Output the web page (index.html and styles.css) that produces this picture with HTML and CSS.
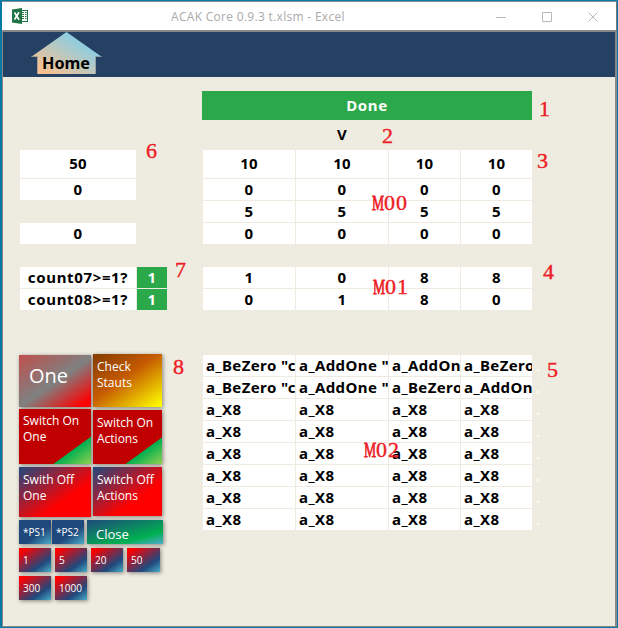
FILE: index.html
```html
<!DOCTYPE html>
<html lang="en">
<head>
<meta charset="utf-8">
<title>ACAK Core 0.9.3 t.xlsm - Excel</title>
<link rel="stylesheet" href="styles.css">
</head>
<body>
<div class="window">
  <header class="titlebar">
    <svg class="excel" width="16" height="16" viewBox="0 0 16 16">
      <rect x="8.5" y="2.5" width="7" height="11" fill="#fff" stroke="#217346"/>
      <path d="M10 4.5h2M13 4.5h1.500M10 6.500h2M13 6.500h1.500M10 8.500h2M13 8.500h1.500M10 10.500h2M13 10.500h1.500" stroke="#217346"/>
      <path d="M0 1.500 10 0v16L0 14.500z" fill="#217346"/>
      <path d="m2.500 4.500 4.500 7.200M7 4.300 2.500 11.500" stroke="#fff" stroke-width="1.700"/>
    </svg>
    <span class="title">ACAK Core 0.9.3 t.xlsm - Excel</span>
    <svg class="controls" width="102" height="10" viewBox="0 0 102 10" fill="none" stroke="#b9b9b9">
      <path d="M0 5.500h10M46.500.5h9v9h-9zM92.500.5l9 9M101.500.5l-9 9"/>
    </svg>
  </header>
  <nav class="ribbon">
    <svg class="house" width="71" height="42" viewBox="0 0 71 42">
      <defs><linearGradient id="roof" x1="0" y1="1" x2="1" y2="0"><stop offset=".1" stop-color="#fac090"/><stop offset=".7" stop-color="#93cddd"/></linearGradient></defs>
      <path d="M35.500 0 71 25h-6v17H6V25H0z" fill="url(#roof)"/>
      <path d="M.5 24.500H6.500V42M70.500 24.500H64.500V42" fill="none" stroke="#8b8b8b" stroke-opacity=".65"/>
      <text class="home" x="11" y="37" textLength="48" lengthAdjust="spacingAndGlyphs">Home</text>
    </svg>
  </nav>
  <main class="sheet">
    <section class="left">
      <div class="grid single">
        <span class="tall">50</span><span>0</span>
      </div>
      <div class="grid single"><span>0</span></div>
      <div class="grid counts">
        <span class="label">count07&gt;=1?</span><span class="on">1</span>
        <span class="label">count08&gt;=1?</span><span class="on">1</span>
      </div>
      <div class="buttons">
        <div class="pair">
          <div class="stack">
            <div role="button" class="btn one">One</div>
            <div role="button" class="btn on-one">Switch On<br>One</div>
            <div role="button" class="btn off-one">Swith Off<br>One</div>
          </div>
          <div class="stack second">
            <div role="button" class="btn check">Check<br>Stauts</div>
            <div role="button" class="btn on-actions">Switch On<br>Actions</div>
            <div role="button" class="btn off-actions">Switch Off<br>Actions</div>
          </div>
        </div>
        <div class="line tools">
          <div role="button" class="btn ps">*PS1</div><div role="button" class="btn ps">*PS2</div><div role="button" class="btn close">Close</div>
        </div>
        <div class="line">
          <div role="button" class="btn num">1</div><div role="button" class="btn num">5</div><div role="button" class="btn num">20</div><div role="button" class="btn num wide">50</div>
        </div>
        <div class="line">
          <div role="button" class="btn num">300</div><div role="button" class="btn num">1000</div>
        </div>
      </div>
    </section>
    <section class="right">
      <div class="done">Done</div>
      <div class="marker">V</div>
      <div class="grid quad">
        <span class="tall">10</span><span class="tall">10</span><span class="tall">10</span><span class="tall">10</span>
        <span>0</span><span>0</span><span>0</span><span>0</span>
        <span>5</span><span>5</span><span>5</span><span>5</span>
        <span>0</span><span>0</span><span>0</span><span>0</span>
      </div>
      <div class="grid quad">
        <span>1</span><span>0</span><span>8</span><span>8</span>
        <span>0</span><span>1</span><span>8</span><span>0</span>
      </div>
      <div class="grid quad actions">
        <span>a_BeZero "c</span><span>a_AddOne "</span><span>a_AddOn</span><span>a_BeZero</span><i>.</i>
        <span>a_BeZero "c</span><span>a_AddOne "</span><span>a_BeZero</span><span>a_AddOn</span><i>.</i>
        <span>a_X8</span><span>a_X8</span><span>a_X8</span><span>a_X8</span><i>.</i>
        <span>a_X8</span><span>a_X8</span><span>a_X8</span><span>a_X8</span><i>.</i>
        <span>a_X8</span><span>a_X8</span><span>a_X8</span><span>a_X8</span><i>.</i>
        <span>a_X8</span><span>a_X8</span><span>a_X8</span><span>a_X8</span><i>.</i>
        <span>a_X8</span><span>a_X8</span><span>a_X8</span><span>a_X8</span><i>.</i>
        <span>a_X8</span><span>a_X8</span><span>a_X8</span><span>a_X8</span><i>.</i>
      </div>
    </section>
  </main>
  <b class="note n1">1</b><b class="note n2">2</b><b class="note n3">3</b><b class="note n4">4</b>
  <b class="note n5">5</b><b class="note n6">6</b><b class="note n7">7</b><b class="note n8">8</b>
  <b class="note m0"><span>M</span>00</b><b class="note m1"><span>M</span>01</b><b class="note m2"><span>M</span>02</b>
</div>
</body>
</html>
```
FILE: styles.css
```css
* { box-sizing: border-box; }
body { margin: 0; font-family: "Noto Sans", "Open Sans", sans-serif; overflow: hidden; }
.window {
  position: relative; width: 618px; height: 628px; overflow: hidden;
  background: #eeebe0; border: 1px solid #0878a4; border-left-width: 2px;
  display: flex; flex-direction: column;
}
.titlebar {
  height: 31px; flex: none; background: #fff; border-top: 1px solid #8a9296;
  border-bottom: 2px solid #888; display: flex; align-items: center;
  border-right: 1px solid #777;
}
.excel { margin-left: 10px; }
.title { margin-left: 143px; width: 176px; font-family: "Open Sans", sans-serif; font-size: 12px; letter-spacing: .3px; color: #aaa; white-space: nowrap; }
.controls { margin-left: 149px; margin-top: 1px; }
.ribbon { height: 45px; flex: none; background: #244062; padding-left: 28px; border-left: 1px solid #888; border-right: 2px solid #888; }
.house { display: block; }
.home { font-weight: 700; font-size: 16.500px; }
.sheet { flex: 1; display: flex; border: solid #888; border-width: 0 2px 1px 1px; }
.left { width: 199px; padding: 73px 0 0 17px; }
.right { width: 380px; padding-top: 14px; }

.grid { display: grid; gap: 1px; grid-auto-rows: minmax(21px, auto); margin-bottom: 23px; font-size: 15px; letter-spacing: .25px; font-weight: 700; line-height: 21px; text-align: center; }
.grid span { background: #fff; height: 21px; overflow: hidden; white-space: nowrap; }
.grid .tall { height: 28px; line-height: 26px; }
.grid .label { letter-spacing: .65px; }
.single { grid-template-columns: 116px; }
.counts { grid-template-columns: 116px 30px; margin-bottom: 45px; }
.grid .on { background: #2ba84a; color: #fff; }
.quad { grid-template-columns: 92px 92px 71px 71px; margin-left: 1px; }
.actions { grid-template-columns: 92px 92px 71px 71px 12px; margin-top: 45px; text-align: left; letter-spacing: .4px; }
.actions span { padding-left: 3px; }
.actions i { padding-left: 3px; color: #fff; font-style: normal; font-weight: 400; height: 21px; }
.done { width: 330px; height: 29px; line-height: 29px; background: #2ba84a; color: #fff; font-weight: 700; font-size: 15px; letter-spacing: .6px; text-align: center; }
.marker { width: 92px; margin-left: 94px; height: 30px; line-height: 29px; font-weight: 700; font-size: 15px; text-align: center; }

.buttons { width: 146px; margin-left: -1px; }
.pair { display: flex; gap: 2px; height: 165px; }
.stack { width: 72px; display: flex; flex-direction: column; }
.second { width: 69px; margin-top: -1px; }
.btn {
  flex: none; padding: 4px 0 0 4px; color: #fff;
  font: 12px/16px "Open Sans", sans-serif; white-space: nowrap;
  box-shadow: 1px 1px 4px rgba(0, 0, 0, .45);
}
.one { height: 52px; padding: 9px 0 0 10px; font-size: 20px; line-height: 24px; background: linear-gradient(145deg, #c0504d, #808080 50%, #808080 52%, #f00 92%); }
.check { height: 53px; margin-bottom: 3px; padding-top: 5px; background: linear-gradient(145deg, #843c00, #c55a00 45%, #ffff00 98%); }
.on-one { height: 55px; margin: 2px 0 3px; background: linear-gradient(144deg, #c00000 74%, #00b050 75%, #92d050); }
.on-actions { height: 54px; margin-bottom: 3px; padding-top: 5px; background: linear-gradient(144deg, #c00000 74%, #00b050 75%, #92d050); }
.off-one { height: 50px; padding-top: 5px; background: linear-gradient(145deg, #1f497d, #f00 65%); }
.off-actions { height: 49px; padding-top: 5px; background: linear-gradient(145deg, #1f497d, #f00 65%); }
.line { display: flex; gap: 4px; margin-bottom: 4px; }
.tools { gap: 1px; }
.ps, .num { width: 32px; height: 24px; font-size: 10px; }
.ps { background: linear-gradient(145deg, #1f497d 60%, #4bacc6); }
.close { width: 76px; height: 24px; margin-left: 2px; padding: 6px 0 0 9px; font-size: 13px; background: linear-gradient(165deg, #1f497d, #00b050 72%, #4bacc6 98%); }
.num { background: linear-gradient(145deg, #f00 10%, #1f497d 70%, #4bacc6); }
.wide { width: 33px; }

.note { position: absolute; color: #ed1c24; font: 400 22px/24px "Liberation Serif", serif; letter-spacing: 1px; -webkit-text-stroke: .4px #ed1c24; }
.note span { display: inline-block; width: 12px; transform: scaleX(.62); transform-origin: 0 50%; -webkit-text-stroke-width: .8px; }
.n1 { left: 537px; top: 96px; }
.n2 { left: 380px; top: 123px; }
.n3 { left: 535px; top: 148px; }
.n4 { left: 541px; top: 259px; }
.n5 { left: 545px; top: 357px; }
.n6 { left: 144px; top: 138px; }
.n7 { left: 173px; top: 257px; }
.n8 { left: 171px; top: 354px; }
.m0 { left: 370px; top: 190px; }
.m1 { left: 371px; top: 274px; }
.m2 { left: 362px; top: 437px; }
```
